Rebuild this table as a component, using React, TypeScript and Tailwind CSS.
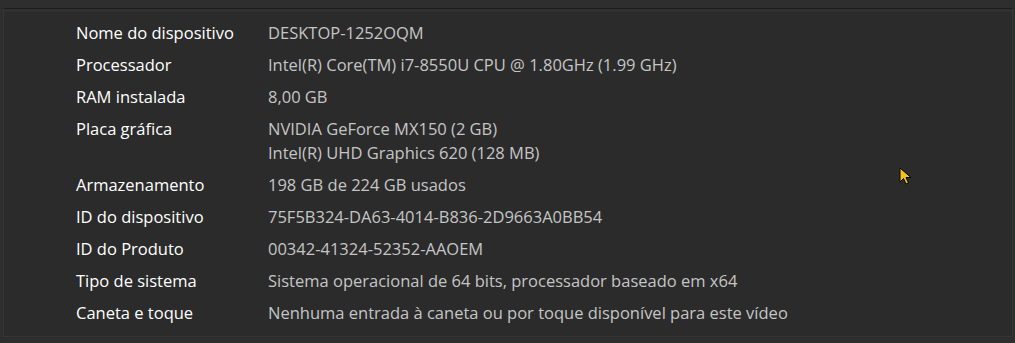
const rows: { label: string; values: string[] }[] = [
  { label: "Nome do dispositivo", values: ["DESKTOP-1252OQM"] },
  { label: "Processador", values: ["Intel(R) Core(TM) i7-8550U CPU @ 1.80GHz (1.99 GHz)"] },
  { label: "RAM instalada", values: ["8,00 GB"] },
  {
    label: "Placa gráfica",
    values: ["NVIDIA GeForce MX150 (2 GB)", "Intel(R) UHD Graphics 620 (128 MB)"],
  },
  { label: "Armazenamento", values: ["198 GB de 224 GB usados"] },
  { label: "ID do dispositivo", values: ["75F5B324-DA63-4014-B836-2D9663A0BB54"] },
  { label: "ID do Produto", values: ["00342-41324-52352-AAOEM"] },
  { label: "Tipo de sistema", values: ["Sistema operacional de 64 bits, processador baseado em x64"] },
  { label: "Caneta e toque", values: ["Nenhuma entrada à caneta ou por toque disponível para este vídeo"] },
];

export default function App() {
  return (
    <div
      className="relative w-[1015px] h-[343px] bg-[#2e2e2e] pt-[8px] overflow-hidden"
      style={{ fontFamily: '"Open Sans", "Noto Sans", sans-serif' }}
    >
      <div className="h-[329px] ml-[3px] mr-[2px] border-t border-[#1c1c1c] border-l border-l-[#353535] border-r border-r-[#353535] border-b border-b-[#353535] bg-[#2b2b2b]">
        <div className="h-[3px] bg-[#313131]" />
        <div className="pt-[5px] pl-[72px]">
          {rows.map((row) => (
            <div key={row.label} className="flex py-[4px] text-[16.5px] leading-[24px]">
              <div className="w-[192px] shrink-0 text-white">{row.label}</div>
              <div className="text-[#c5c5c5] whitespace-nowrap">
                {row.values.map((v) => (
                  <div key={v}>{v}</div>
                ))}
              </div>
            </div>
          ))}
        </div>
      </div>

      {/* mouse pointer */}
      <svg className="absolute left-[899px] top-[167px]" width="14" height="20" viewBox="0 0 14 20">
        <path d="M1 1 L1 15 L4.5 11.5 L7 17 L9.5 16 L7 10.5 L12 10.5 Z" fill="#f2c21b" stroke="#000" strokeWidth="1" />
      </svg>
    </div>
  );
}
